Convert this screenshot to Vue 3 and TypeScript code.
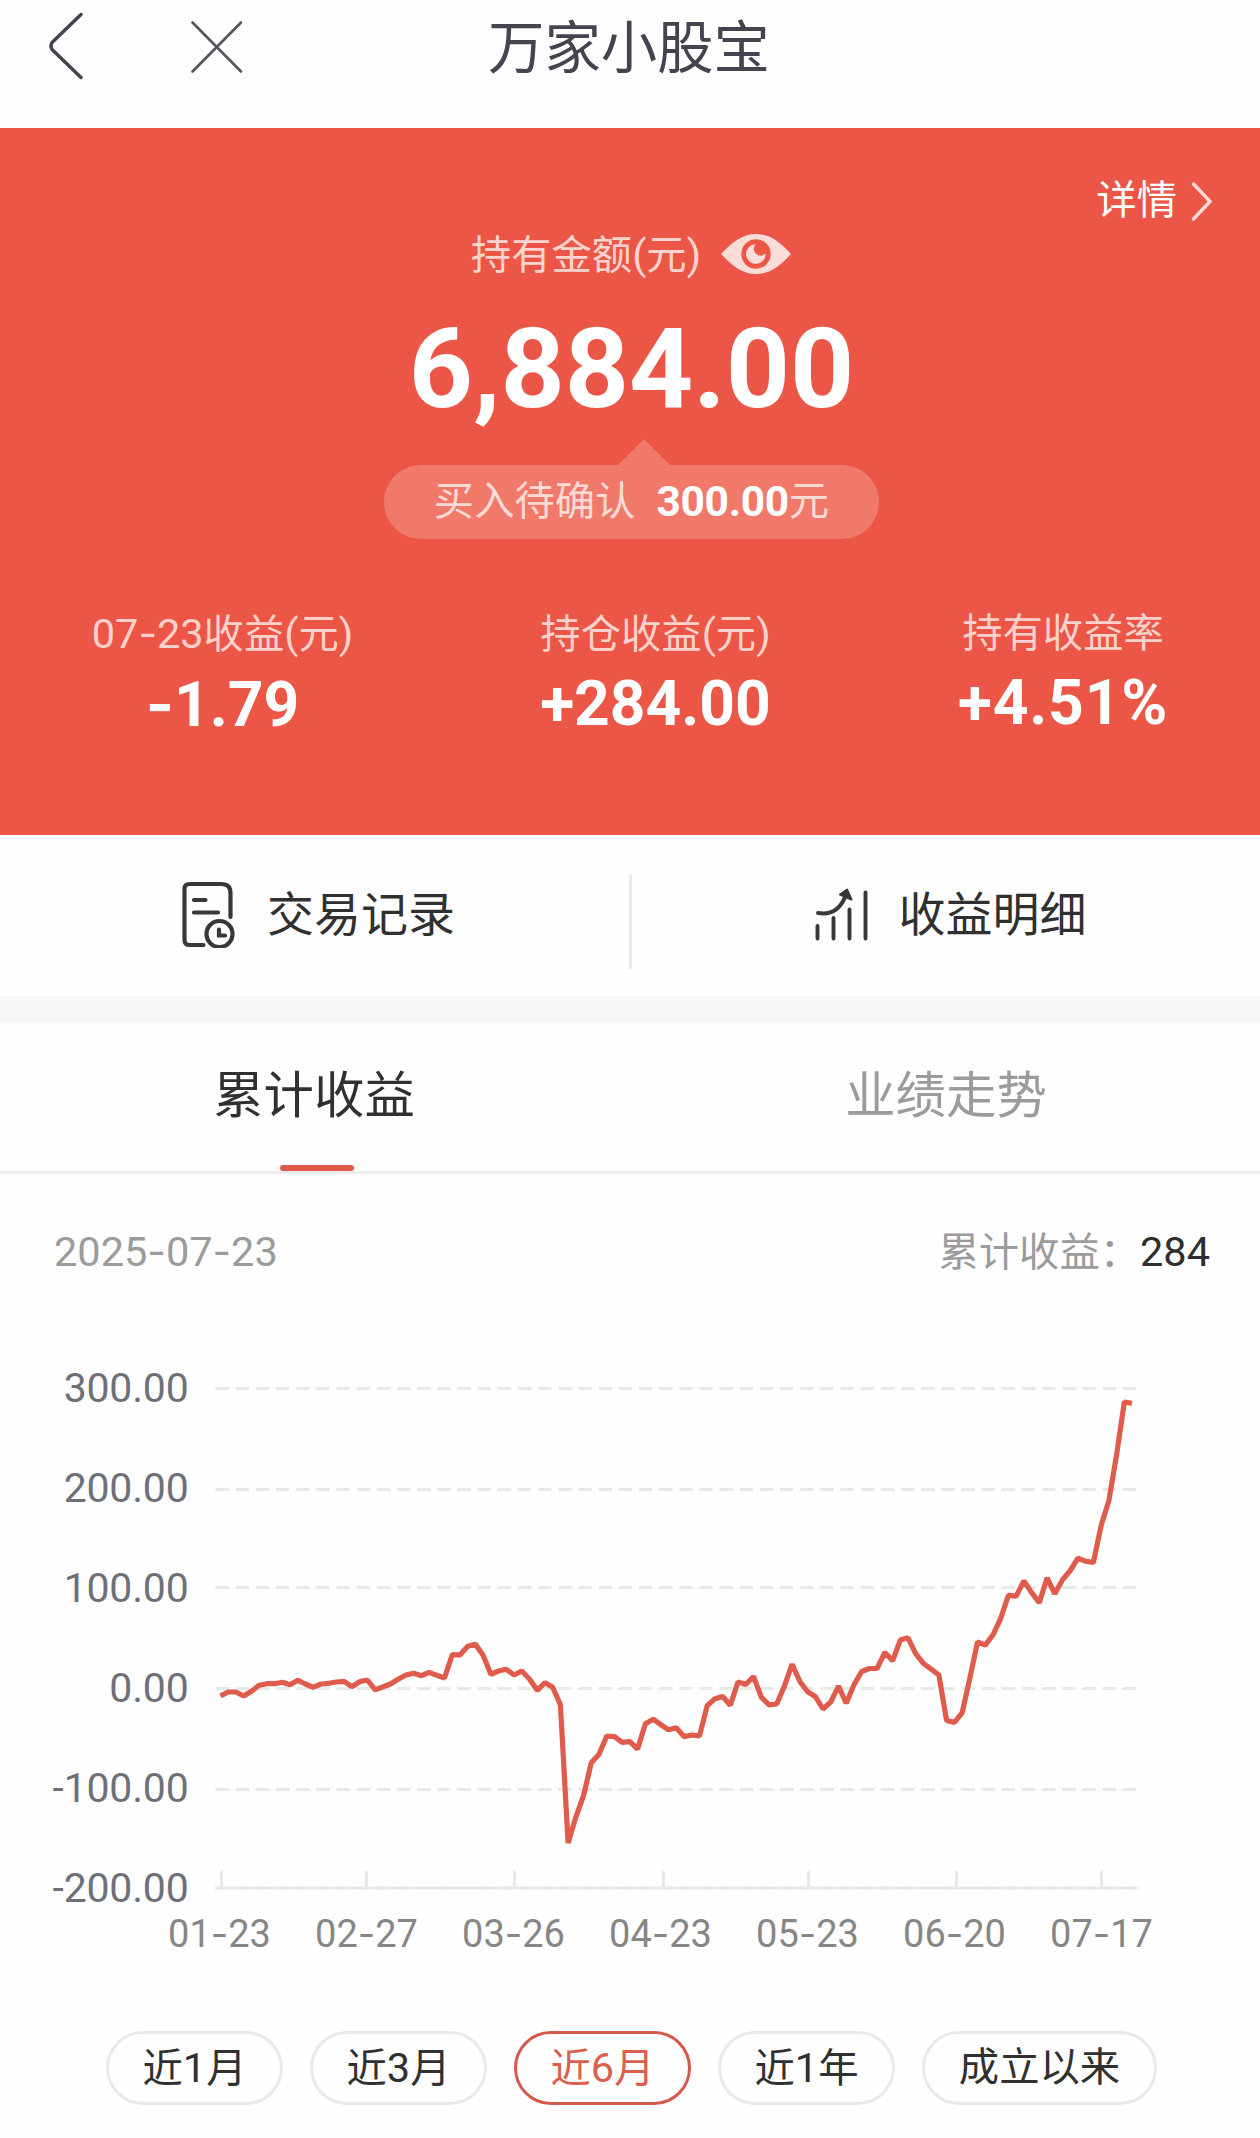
<script setup lang="ts">
import { h, type FunctionalComponent } from 'vue'

interface Stat {
  label: string
  value: string
}

// Renders mixed text: digits, hyphens and Chinese characters get their own font settings.
const Mixed: FunctionalComponent<{ text: string }> = (props) =>
  h(
    'span',
    { class: 'mixed' },
    (props.text.match(/-|[\d.,()+%]+|[^\d.,()+%-]+/g) ?? []).map((part) =>
      part === '-'
        ? h('span', { class: 'mixed-dash' }, part)
        : /^[\d.,()+%]/.test(part)
          ? h('span', { class: 'mixed-num' }, part)
          : part,
    ),
  )
Mixed.props = ['text']

const stats: Stat[] = [
  { label: '07-23收益(元)', value: '-1.79' },
  { label: '持仓收益(元)', value: '+284.00' },
  { label: '持有收益率', value: '+4.51%' },
]

const tabs = ['累计收益', '业绩走势']
const activeTab = 0

const ranges = ['近1月', '近3月', '近6月', '近1年', '成立以来']
const activeRange = 2

const series: number[] = [
  -7.5, -3.5, -3.5, -7.5, -2.8, 3.2, 4.8, 4.8, 6.2, 3.8, 8.2, 4.5, 1.2, 4.5, 5.2, 6.5, 7.2, 1.8, 6.8, 8.5,
  -1.2, 1.5, 4.5, 9.2, 13.5, 15.2, 12.8, 16.2, 13.2, 10.5, 33.8, 33.5, 42.2, 44.2, 33.2, 14.2, 17.5, 19.2, 13.5, 17.5,
  9.5, -1.8, 5.8, 1.2, -16.2, -154.5, -128.8, -106.8, -74.2, -65.8, -47.5, -48.2, -53.8, -53.2, -60.5, -35.2, -30.7, -36.2, -41.2, -39.3,
  -48.1, -46.5, -47.3, -17.1, -10.2, -7.9, -16.7, 6.6, 4, 12, -8.7, -16.3, -15.5, 2.4, 24.3, 7, -3.3, -7.9, -20.5, -13.3,
  2.4, -14.8, 3.6, 17, 20, 20, 36.1, 27.7, 48.4, 50.7, 34.6, 25, 19.3, 13.5, -32, -33.9, -24.4, 10.1, 46.5, 43.4,
  53.7, 70.2, 93.1, 92.4, 107.7, 95.8, 85.9, 110.7, 94.7, 108.8, 118, 130.3, 127.2, 126.1, 163.2, 188, 233.6, 286.4, 285.3,
]

const zeroY = 348.5
const startX = 220.5
const stepX = 7.725
const points = series.map((v, i) => `${(startX + i * stepX).toFixed(1)},${(zeroY - v).toFixed(1)}`).join(' ')

const yAxis = [
  { text: '300.00', y: 48.5 },
  { text: '200.00', y: 149.5 },
  { text: '100.00', y: 247.5 },
  { text: '0.00', y: 348.5 },
  { text: '-100.00', y: 449.5 },
  { text: '-200.00', y: 548 },
]

const xAxis = [
  { month: '01', day: '23', tick: 221.5 },
  { month: '02', day: '27', tick: 366.5 },
  { month: '03', day: '26', tick: 514.5 },
  { month: '04', day: '23', tick: 663.5 },
  { month: '05', day: '23', tick: 808.5 },
  { month: '06', day: '20', tick: 956.5 },
  { month: '07', day: '17', tick: 1101.5 },
]
</script>

<template>
  <main class="page">
    <header class="nav">
      <svg class="nav-back" viewBox="0 0 36 70" width="36" height="70">
        <path d="M33 3.500 L4 31.500 Q2 35 4 38.500 L33 66.500" />
      </svg>
      <svg class="nav-close" viewBox="0 0 54 54" width="54" height="54">
        <path d="M2.500 2.500 L51 51.500 M51 2.500 L2.500 51.500" />
      </svg>
      <h1 class="nav-title">万家小股宝</h1>
    </header>

    <section class="hero">
      <div class="detail">
        <span>详情</span>
        <svg viewBox="0 0 22 40" width="22" height="40">
          <path d="M2.500 3 L19 20.500 L2.500 38" />
        </svg>
      </div>
      <div class="hold">
        <Mixed text="持有金额(元)" />
        <svg viewBox="0 0 70 40" width="70" height="40">
          <path class="eye-white" d="M0 20 C12 7 22 0 35 0 S58 7 70 20 C58 33 48 40 35 40 S12 33 0 20 Z" />
          <circle class="eye-ring" cx="35" cy="20" r="14.700" />
          <path class="eye-white" d="M34.500 10.300 A9.800 9.800 0 1 0 44.600 19.300 A6 6 0 0 1 34.500 10.300 Z" />
        </svg>
      </div>
      <div class="amount">6,884.00</div>
      <div class="pending">
        <span>买入待确认</span>
        <strong>300.00</strong>
        <span>元</span>
      </div>
      <div class="stats">
        <div v-for="s in stats" :key="s.label" class="stat">
          <div class="stat-label"><Mixed :text="s.label" /></div>
          <div class="stat-value"><Mixed :text="s.value" /></div>
        </div>
      </div>
    </section>

    <section class="actions">
      <div class="action">
        <svg class="icon-doc" viewBox="0 0 56 68" width="56" height="68">
          <path d="M49.500 37 V13 Q49.500 4 40.500 4 H8.500 Q3.500 4 3.500 9 V60 Q3.500 65 8.500 65 H22.500" />
          <path d="M13 20 H24.500 M13 32.500 H37" />
          <circle cx="38.500" cy="54" r="13" />
          <path d="M38 49.500 V55.500 H44" />
        </svg>
        <span>交易记录</span>
      </div>
      <i class="divider"></i>
      <div class="action action-right">
        <svg class="icon-bars" viewBox="0 0 56 54" width="56" height="54">
          <path d="M3.500 38 V50.500 M19.500 30 V50.500 M35.500 21.500 V50.500 M51.500 4.500 V50.500" />
          <path d="M4 25 C19 27.500 27 19.500 31.500 8" />
          <path class="arrow" d="M33 1.500 L37.500 11.500 L26 6.500 Z" />
        </svg>
        <span>收益明细</span>
      </div>
    </section>

    <div class="band"></div>

    <nav class="tabs">
      <div v-for="(t, i) in tabs" :key="t" class="tab" :class="{ active: i === activeTab }">{{ t }}</div>
    </nav>

    <section class="summary">
      <Mixed class="date" text="2025-07-23" />
      <div class="total">
        <span>累计收益：</span>
        <b>284</b>
      </div>
    </section>

    <svg class="chart" viewBox="0 0 1260 640" width="1260" height="640">
      <line v-for="g in yAxis" :key="g.text" class="grid" x1="215.500" x2="1137" :y1="g.y" :y2="g.y" />
      <line class="axis" x1="215" x2="1137.500" y1="548" y2="548" />
      <line v-for="x in xAxis" :key="x.tick" class="tick" :x1="x.tick" :x2="x.tick" y1="531" y2="548" />
      <text v-for="(g, i) in yAxis" :key="g.text" class="y-label" x="188.500" :y="61.500 + i * 100.150">{{ g.text }}</text>
      <text v-for="(x, i) in xAxis" :key="x.tick" class="x-label" :x="219.500 + i * 147" y="607">{{ x.month }}<tspan class="x-dash">-</tspan>{{ x.day }}</text>
      <polyline class="line" :points="points" />
    </svg>

    <footer class="ranges">
      <button v-for="(r, i) in ranges" :key="r" class="range" :class="{ active: i === activeRange }">
        <Mixed :text="r" />
      </button>
    </footer>
  </main>
</template>

<style>
body {
  background: #fefefe;
}
.mixed {
  white-space: nowrap;
}
.mixed-num {
  font-size: 1.03em;
}
.mixed-dash {
  font-family: Inter, sans-serif;
}
</style>

<style scoped>
.page {
  width: 1260px;
  height: 2138px;
  overflow: hidden;
  display: flex;
  flex-direction: column;
  background: #fefefe;
  font-family: Roboto, 'Noto Sans CJK SC', sans-serif;
  font-size: 40.320px;
  color: #303030;
}
svg {
  display: block;
  flex: none;
  fill: none;
}
.nav {
  height: 128px;
  display: grid;
  grid-template-columns: 142px 300px 374px 1fr;
  align-items: start;
}
.nav-back {
  margin: 11px 0 0 48px;
  stroke: #44434f;
  stroke-width: 3.500;
  stroke-linecap: round;
}
.nav-close {
  margin: 20px 0 0 48px;
  stroke: #55545f;
  stroke-width: 2.600;
  stroke-linecap: round;
}
.nav-title {
  margin: 0;
  text-align: center;
  font-size: 56.400px;
  font-weight: 400;
  line-height: 99px;
  color: #44434f;
}
.hero {
  height: 707px;
  box-sizing: border-box;
  padding-top: 43px;
  background: #ec5646;
  color: #fff;
  display: flex;
  flex-direction: column;
}
.detail {
  display: flex;
  justify-content: flex-end;
  align-items: center;
  gap: 14px;
  padding-right: 47px;
  height: 59px;
  line-height: 62px;
}
.detail svg {
  stroke: #fbdcd9;
  stroke-width: 3.400;
  stroke-linecap: round;
}
.hold {
  height: 50px;
  padding-left: 2px;
  display: flex;
  justify-content: center;
  align-items: center;
  gap: 20px;
  line-height: 48px;
  color: #fcd4cf;
}
.hold svg {
  margin-bottom: 2px;
}
.eye-white {
  fill: #fcdcd9;
}
.eye-ring {
  fill: #ec5646;
}
.amount {
  margin-top: 34px;
  padding-left: 3px;
  text-align: center;
  font-size: 112px;
  font-weight: 700;
  line-height: 110px;
}
.pending {
  position: relative;
  width: 495px;
  height: 74px;
  margin: 41px 0 0 384px;
  border-radius: 37px;
  background: #f07969;
  display: flex;
  justify-content: center;
  align-items: center;
  line-height: 70px;
  color: #fcdad6;
}
.pending::before {
  content: '';
  position: absolute;
  left: 234px;
  top: -26px;
  border: 26px solid transparent;
  border-top: 0;
  border-bottom-color: #f07969;
}
.pending strong {
  margin: 0 0 0 21px;
  font-size: 42.500px;
  font-weight: 700;
  letter-spacing: -0.300px;
  color: #fff;
}
.stats {
  margin-top: 65px;
  display: grid;
  grid-template-columns: 445px 421px 1fr;
  text-align: center;
}
.stat-label {
  line-height: 60px;
  color: #fcd0cb;
}
.stat-value {
  margin-top: 4px;
  font-size: 60.500px;
  font-weight: 700;
  line-height: 70px;
}
.stat:last-child .stat-value {
  letter-spacing: 0.800px;
}
.actions {
  height: 161px;
  display: flex;
  font-size: 47px;
}
.action {
  width: 629px;
  box-sizing: border-box;
  padding-left: 181px;
  display: flex;
  line-height: 160px;
}
.action svg {
  stroke: #383838;
  stroke-width: 4.200;
  stroke-linecap: round;
}
.icon-doc {
  margin: 45px 30px 0 0;
}
.action-right {
  padding-left: 182px;
}
.action .icon-bars {
  margin: 53px 29px 0 0;
  stroke-width: 3.900;
}
.icon-bars .arrow {
  fill: #383838;
  stroke-width: 2;
  stroke-linejoin: round;
}
.divider {
  width: 3px;
  height: 94px;
  margin-top: 40px;
  background: #e9e9e9;
}
.band {
  height: 27px;
  background: #f7f7f7;
}
.tabs {
  height: 151px;
  box-sizing: border-box;
  border-bottom: 3px solid #ececec;
  display: flex;
}
.tab {
  flex: 1;
  padding-left: 4px;
  text-align: center;
  font-size: 50.400px;
  line-height: 145px;
  color: #9b9b9b;
}
.tab.active {
  padding-left: 0;
  color: #303030;
}
.tab.active::after {
  content: '';
  display: block;
  width: 74px;
  height: 6px;
  margin: -3px 0 0 280px;
  border-radius: 3px;
  background: #e05a4a;
}
.summary {
  height: 166px;
  box-sizing: border-box;
  padding: 48px 50px 0 54px;
  display: flex;
  justify-content: space-between;
  line-height: 60px;
  color: #9b9b9b;
}
.total {
  display: flex;
}
.total span {
  padding-top: 1px;
}
.total b {
  font-size: 41.500px;
  font-weight: 400;
  color: #2e2e2e;
}
.chart {
  margin-bottom: 51px;
}
.grid {
  stroke: #e8e8e8;
  stroke-width: 3;
  stroke-dasharray: 13.440 6.720;
}
.axis {
  stroke: #e8e8e8;
  stroke-width: 2.500;
}
.tick {
  stroke: #e8e8e8;
  stroke-width: 3;
}
.y-label {
  fill: #6e7079;
  font-size: 41px;
  letter-spacing: -0.200px;
  text-anchor: end;
}
.x-label {
  fill: #868686;
  font-size: 38px;
  text-anchor: middle;
}
.x-dash {
  font-family: Inter, sans-serif;
}
.line {
  stroke: #df5b4c;
  stroke-width: 5.200;
  stroke-linejoin: bevel;
}
.ranges {
  display: flex;
  gap: 27px;
  padding-left: 106px;
}
.range {
  flex: none;
  width: 177px;
  height: 74px;
  padding: 0;
  border: 3px solid #e9e9e9;
  border-radius: 37px;
  background: transparent;
  font: inherit;
  line-height: 68px;
  color: #303030;
}
.range:last-child {
  width: 235px;
}
.range.active {
  border-color: #d25a4c;
  color: #d9604f;
}
</style>
